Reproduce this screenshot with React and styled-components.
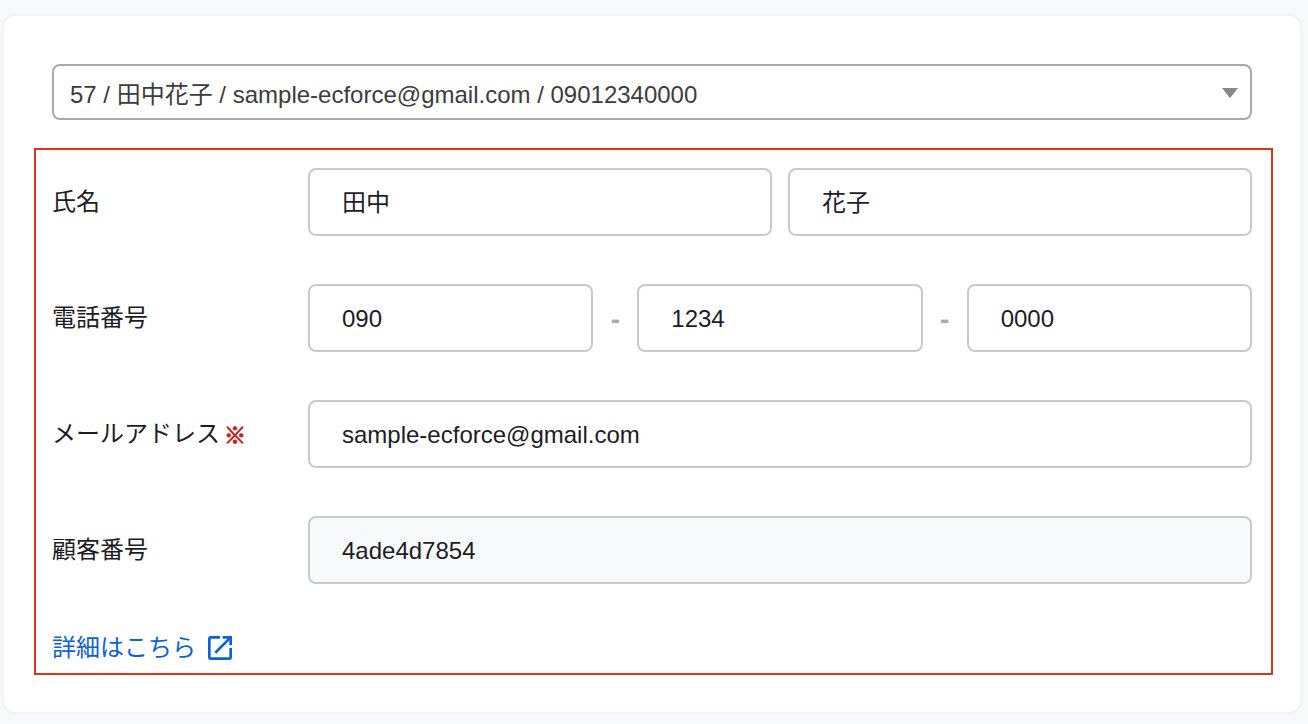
import React from "react";
import styled, { createGlobalStyle } from "styled-components";

const GlobalStyle = createGlobalStyle`
  *, *::before, *::after { box-sizing: border-box; }
  body {
    margin: 0;
    background: #f7f9fb;
    color: #1c1d26;
    font-family: "Liberation Sans", "Noto Sans CJK JP", sans-serif;
    font-size: 24px;
    line-height: 32px;
  }
`;

const Page = styled.main`
  padding: 16px 8px 12px 4px;
`;

const Card = styled.form`
  padding: 48px 48px 37px;
  border-radius: 12px;
  background: #fff;
  box-shadow: 0 0 6px rgba(40, 50, 70, 0.07);
`;

const SelectBox = styled.div`
  display: grid;
  align-items: center;
  > * { grid-area: 1 / 1; }
`;

const Select = styled.select`
  appearance: none;
  width: 100%;
  height: 56px;
  padding: 6px 48px 0 16px;
  border: 2px solid #a9a9a9;
  border-radius: 8px;
  background: #fff;
  color: #3c3c3c;
  font: inherit;
`;

const Caret = styled.svg`
  justify-self: end;
  width: 16px;
  height: 12px;
  margin-right: 14px;
  pointer-events: none;
`;

const Highlight = styled.section`
  display: flex;
  flex-direction: column;
  gap: 48px;
  margin: 28px -21px 0 -18px;
  padding: 18px 19px 9px 16px;
  border: 2px solid #d9361b;
`;

const Row = styled.div`
  display: grid;
  grid-template-columns: 256px minmax(0, 1fr);
  align-items: center;
`;

const Label = styled.label`
  display: flex;
  align-items: center;
  gap: 4px;
`;

const Required = styled.span`
  padding-top: 4px;
  color: #c5221a;
  font-size: 22px;
  font-weight: 700;
  -webkit-text-stroke: 1px currentColor;
`;

const Fields = styled.div`
  display: flex;
  align-items: center;
  gap: ${(p) => p.$gap || 0}px;
`;

const Input = styled.input`
  flex: 1;
  min-width: 0;
  height: 68px;
  padding: ${(p) => (p.$kanji ? "0 32px 4px" : "2px 32px 0")};
  border: 2px solid #c9c9d1;
  border-radius: 8px;
  background: ${(p) => (p.readOnly ? "#f7f9fb" : "#fff")};
  color: inherit;
  font: inherit;
`;

const Dash = styled.span`
  width: 44px;
  padding-top: 4px;
  color: #a9a9b0;
  font-size: 28px;
  font-weight: 700;
  text-align: center;
`;

const DetailLink = styled.a`
  display: flex;
  align-items: center;
  align-self: flex-start;
  gap: 12px;
  color: #0b62d6;
  text-decoration: none;
`;

const customer = "57 / 田中花子 / sample-ecforce@gmail.com / 09012340000";

export default function App() {
  return (
    <>
      <GlobalStyle />
      <Page>
        <Card>
          <SelectBox>
            <Select aria-label="顧客" defaultValue={customer}>
              <option>{customer}</option>
            </Select>
            <Caret viewBox="0 0 16 12" aria-hidden="true">
              <path d="M0 2H16L8 12Z" fill="#888" />
            </Caret>
          </SelectBox>
          <Highlight>
            <Row>
              <Label htmlFor="last-name">氏名</Label>
              <Fields $gap={16}>
                <Input id="last-name" $kanji defaultValue="田中" />
                <Input aria-label="名" $kanji defaultValue="花子" />
              </Fields>
            </Row>
            <Row>
              <Label htmlFor="tel">電話番号</Label>
              <Fields>
                <Input id="tel" type="tel" defaultValue="090" />
                <Dash>-</Dash>
                <Input type="tel" aria-label="電話番号 2" defaultValue="1234" />
                <Dash>-</Dash>
                <Input type="tel" aria-label="電話番号 3" defaultValue="0000" />
              </Fields>
            </Row>
            <Row>
              <Label htmlFor="email">
                メールアドレス<Required>※</Required>
              </Label>
              <Fields>
                <Input id="email" type="email" defaultValue="sample-ecforce@gmail.com" />
              </Fields>
            </Row>
            <Row>
              <Label htmlFor="number">顧客番号</Label>
              <Fields>
                <Input id="number" readOnly value="4ade4d7854" />
              </Fields>
            </Row>
            <DetailLink href="#detail">
              詳細はこちら
              <svg width="24" height="24" viewBox="3 3 18 18" fill="currentColor" aria-hidden="true">
                <path d="M19 19H5V5h7V3H5c-1.11 0-2 .9-2 2v14c0 1.1.89 2 2 2h14c1.1 0 2-.9 2-2v-7h-2v7zM14 3v2h3.590l-9.830 9.830 1.410 1.410L19 6.410V10h2V3h-7z" />
              </svg>
            </DetailLink>
          </Highlight>
        </Card>
      </Page>
    </>
  );
}
